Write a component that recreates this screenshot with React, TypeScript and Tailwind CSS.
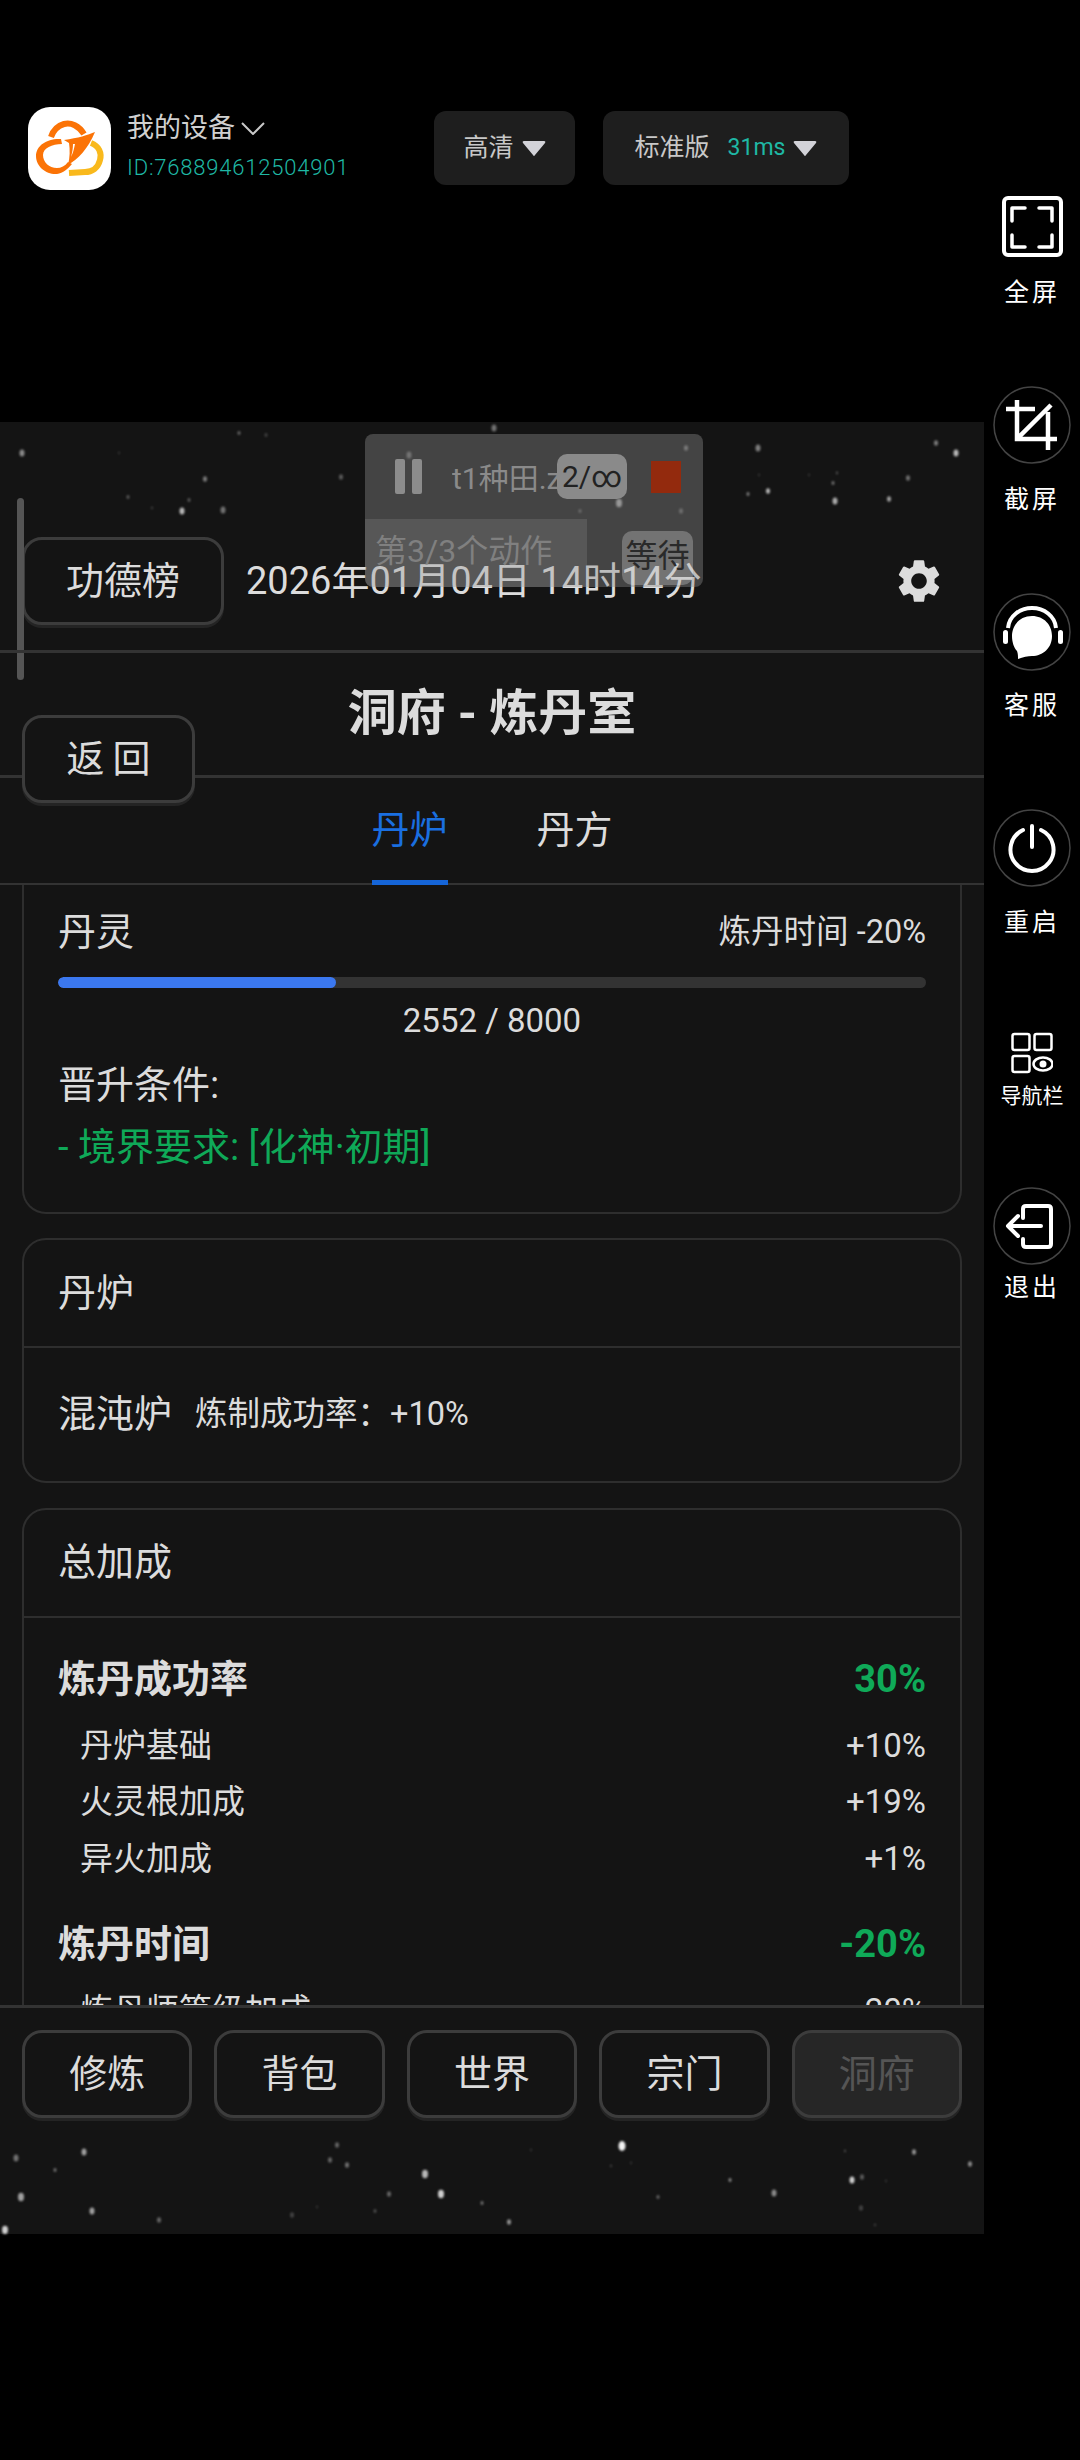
import { MdSettings } from 'react-icons/md';

const topStars: [number, number, number, number][] = [
  [22, 31, 2.5, 0.5], [239, 11, 1.5, 0.35], [266, 13, 1.5, 0.2], [119, 31, 1, 0.15], [205, 57, 2, 0.45], [128, 75, 1.5, 0.3],
  [189, 78, 1.5, 0.3], [182, 89, 2.5, 0.7], [223, 88, 2.5, 0.4], [152, 86, 1, 0.2], [341, 55, 2, 0.3], [494, 6, 2.5, 0.4],
  [686, 26, 2, 0.4], [758, 26, 2.5, 0.45], [936, 21, 2, 0.45], [956, 31, 2.5, 0.7], [837, 51, 1, 0.3], [833, 61, 1.5, 0.4],
  [908, 56, 2, 0.4], [748, 72, 1.5, 0.45], [768, 69, 2, 0.7], [835, 79, 2.5, 0.65], [889, 77, 2, 0.6], [759, 53, 1, 0.15],
  [809, 53, 1, 0.15], [409, 33, 2.5, 0.35], [619, 81, 3, 0.6], [580, 89, 1.5, 0.3], [681, 89, 2, 0.3],
];

const bottomStars: [number, number, number, number][] = [
  [16, 28, 2.5, 0.4], [84, 22, 2.5, 0.6], [55, 40, 1.5, 0.4], [21, 67, 3, 0.6], [92, 81, 2.5, 0.6], [159, 90, 2, 0.35], [5, 100, 3, 0.8],
  [337, 15, 2, 0.35], [330, 30, 2, 0.35], [347, 35, 2, 0.4], [425, 44, 3, 0.7], [389, 64, 2, 0.35], [441, 64, 3, 0.8], [482, 73, 1.5, 0.4],
  [375, 81, 1.5, 0.25], [292, 85, 2, 0.2], [317, 77, 1, 0.15], [509, 92, 2, 0.55], [622, 16, 3.5, 0.95], [531, 20, 1, 0.15], [658, 67, 1.5, 0.35],
  [730, 50, 1.5, 0.5], [774, 63, 2.5, 0.5], [852, 50, 2.5, 0.8], [862, 47, 2, 0.3], [845, 21, 1, 0.25], [914, 22, 2, 0.55], [970, 34, 2, 0.5],
  [861, 78, 2, 0.2], [875, 95, 1, 0.2], [886, 51, 1, 0.15], [611, 36, 1, 0.2], [631, 33, 1, 0.15],
];

function Stars({ height, stars }: { height: number; stars: [number, number, number, number][] }) {
  return (
    <svg width="984" height={height} className="block shrink-0 blur-[1px]">
      {stars.map(([x, y, r, o]) => (
        <ellipse key={`${x}-${y}`} cx={x} cy={y} rx={r} ry={r * 1.4} fill="#ffffff" opacity={o} />
      ))}
    </svg>
  );
}

function Logo() {
  return (
    <div className="h-[83px] w-[83px] shrink-0 rounded-[22px] bg-white">
      <svg width="83" height="83" viewBox="0 0 83 83" fill="none">
        <path d="M63 36 C71 39 74 46 72 53 C70 61 64 65 57 65 L41 66" stroke="#f9b91c" strokeWidth="6" />
        <path d="M56 27 C51 19 43 15 36 17 C29 19 25 24 23 30" stroke="#fb7306" strokeWidth="6" />
        <path d="M33 32 C20 31 8 38 8 49 C8 60 19 68 29 67 C35 66 40 62 44 57 L40 55 C37 59 33 61 29 61 C21 61 15 55 15 48 C15 41 24 37 34 37 Z" fill="#fb7306" />
        <path d="M67 25 C60 28 50 31 36 33 L41 36 C42 43 42 50 40 58 C50 52 60 42 67 25Z" fill="#fb7306" />
        <path d="M45 37 L47 37 C46 42 45 46 43 50 C44 46 45 42 45 37Z" fill="#ffffff" />
      </svg>
    </div>
  );
}

function QualityButton({ children, width }: { children: React.ReactNode; width: string }) {
  return (
    <div className={`flex h-[74px] items-center justify-center gap-2 rounded-xl bg-[#1e1e1e] text-[25px] text-[#c8c8c8] ${width}`}>
      {children}
      <svg width="24" height="17" viewBox="0 0 24 17">
        <path d="M2 1 H22 Q24 1 23 3 L13 15 Q12 17 11 15 L1 3 Q0 1 2 1Z" fill="#d2d2d8" />
      </svg>
    </div>
  );
}

function CircleIcon({ children }: { children: React.ReactNode }) {
  return (
    <svg width="78" height="78" viewBox="0 0 78 78" fill="none" stroke="#ffffff" strokeWidth="4" className="block">
      <circle cx="39" cy="39" r="38" stroke="#444444" strokeWidth="1.5" />
      {children}
    </svg>
  );
}

function RailLabel({ children, className }: { children: string; className: string }) {
  return <div className={`h-[30px] text-center leading-[30px] text-white ${className}`}>{children}</div>;
}

function SideRail() {
  return (
    <div className="flex w-[96px] flex-col items-center pt-[196px]">
      <svg width="61" height="61" viewBox="0 0 61 61" fill="none" stroke="#ffffff" className="block">
        <rect x="2" y="2" width="57" height="57" rx="4" strokeWidth="4" />
        <path d="M10 25 V12 H23 M37 12 H50 V25 M10 39 V51 H23 M37 51 H50 V39" strokeWidth="3.5" strokeLinecap="round" strokeLinejoin="round" />
      </svg>
      <RailLabel className="mt-[21px] text-[25px] tracking-[3px]">全屏</RailLabel>
      <div className="mt-[78px]">
        <CircleIcon>
          <path d="M13 23 H42 M24 14 V53 H64 M58 19 L24 53 M55 26 V64" strokeWidth="4.5" />
        </CircleIcon>
      </div>
      <RailLabel className="mt-[21px] text-[25px] tracking-[3px]">截屏</RailLabel>
      <div className="mt-[78px]">
        <CircleIcon>
          <path d="M15 35 C16 23 27 15 39 15 C51 15 62 23 63 35" />
          <rect x="10" y="37" width="5" height="14" rx="2.5" fill="#ffffff" stroke="none" />
          <rect x="65" y="37" width="5" height="14" rx="2.5" fill="#ffffff" stroke="none" />
          <path d="M39 23 C51 23 59 32 59 43 C59 55 50 63 39 63 C35 63 30 64 25 66 C25 63 25 61 24 58 C21 55 19 49 19 43 C19 32 27 23 39 23Z" fill="#ffffff" stroke="none" />
        </CircleIcon>
      </div>
      <RailLabel className="mt-[20px] text-[25px] tracking-[3px]">客服</RailLabel>
      <div className="mt-[88px]">
        <CircleIcon>
          <path d="M30 21 A21.5 21.5 0 1 0 48 21" strokeLinecap="round" />
          <path d="M39 17 V38" strokeLinecap="round" />
        </CircleIcon>
      </div>
      <RailLabel className="mt-[21px] text-[25px] tracking-[3px]">重启</RailLabel>
      <svg width="42" height="42" viewBox="0 0 42 42" fill="none" stroke="#ffffff" strokeWidth="2.5" className="mt-[94px] block">
        <rect x="1.5" y="2" width="17" height="16" rx="2" />
        <rect x="23.5" y="2" width="17" height="16" rx="2" />
        <rect x="1.5" y="24" width="17" height="16" rx="2" />
        <ellipse cx="32" cy="32" rx="9.5" ry="6.5" />
        <circle cx="32" cy="32" r="3.5" fill="#ffffff" stroke="none" />
      </svg>
      <RailLabel className="mt-[7px] text-[21px]">导航栏</RailLabel>
      <div className="mt-[76px]">
        <CircleIcon>
          <path d="M30 31 V22 Q30 19 33 19 H55 Q58 19 58 22 V57 Q58 60 55 60 H33 Q30 60 30 57 V52" strokeLinecap="round" />
          <path d="M48 39 H15 M25 29 L15 39 L25 49" strokeLinecap="round" strokeLinejoin="round" />
        </CircleIcon>
      </div>
      <RailLabel className="mt-[8px] text-[25px] tracking-[3px]">退出</RailLabel>
    </div>
  );
}

function GameButton({ children, className = '' }: { children: React.ReactNode; className?: string }) {
  return (
    <div className={`flex h-[88px] items-center justify-center rounded-[20px] border-[3px] border-[#3c3c3c] bg-[#141414] text-[38px] text-[#dcdcdc] shadow-[0_3px_0_#242424] ${className}`}>
      {children}
    </div>
  );
}

function TaskOverlay() {
  return (
    <div className="absolute left-[365px] top-[12px] h-[153px] w-[338px] overflow-hidden rounded-[8px] bg-[rgba(140,140,140,0.4)]">
      <div className="flex h-[85px] items-center pl-[30px]">
        <div className="flex w-[27px] justify-between">
          <div className="h-[35px] w-[10px] rounded-[2px] bg-[#8c8c8c]" />
          <div className="h-[35px] w-[10px] rounded-[2px] bg-[#8c8c8c]" />
        </div>
        <div className="ml-[30px] w-[105px] overflow-hidden whitespace-nowrap pt-[4px] text-[30px] text-[#8a8a8a]">t1种田.zip</div>
        <div className="flex h-[45px] w-[70px] items-center justify-center rounded-[10px] bg-[#8a8a8a] text-[30px] text-[#222222]">2/∞</div>
        <div className="ml-[24px] h-[32px] w-[30px] bg-[#932a0d]" />
      </div>
      <div className="flex h-[68px] items-start justify-between pr-[10px]">
        <div className="flex h-full w-[222px] items-center bg-white/10 pb-[4px] pl-[10px] text-[32px] text-[#808080]">第3/3个动作</div>
        <div className="mt-[12px] flex h-[54px] w-[71px] items-center justify-center rounded-[10px] bg-white/25 pb-[4px] text-[32px] text-[#2a2a2a]">等待</div>
      </div>
    </div>
  );
}

function BonusGroup({ title, total, rows }: { title: string; total: string; rows: [string, string][] }) {
  return (
    <div className="mb-[28px]">
      <div className="flex h-[44px] items-center justify-between text-[38px] font-bold">
        <span>{title}</span>
        <span className="text-[#0fa958]">{total}</span>
      </div>
      <div className="mt-[24px] flex flex-col">
        {rows.map(([name, value]) => (
          <div key={name} className="flex h-[56.5px] items-center justify-between pb-[16px] pl-[22px] text-[33px]">
            <span>{name}</span>
            <span>{value}</span>
          </div>
        ))}
      </div>
    </div>
  );
}

export default function App() {
  return (
    <div className="flex h-[2460px] w-[1080px] overflow-hidden bg-black font-['Roboto','Noto_Sans_CJK_SC',sans-serif]">
      <div className="flex w-[984px] flex-col">
        <div className="flex h-[422px] items-start pl-[28px] pt-[107px]">
          <Logo />
          <div className="ml-[16px] w-[223px] pt-[5px]">
            <div className="flex h-[32px] items-center text-[27px] text-[#d0d0d0]">
              我的设备
              <svg width="24" height="13" viewBox="0 0 24 13" fill="none" stroke="#c8c8c8" strokeWidth="2" className="ml-[6px]">
                <path d="M1 1 L12 12 L23 1" />
              </svg>
            </div>
            <div className="mt-[8px] h-[32px] text-[22px] font-light leading-[32px] tracking-[0.8px] text-[#1fb8a5]">ID:768894612504901</div>
          </div>
          <div className="ml-[84px] mt-[4px] flex gap-[28px]">
            <QualityButton width="w-[141px]">高清</QualityButton>
            <QualityButton width="w-[246px]">
              <span>标准版</span>
              <span className="ml-[10px] text-[23px] text-[#1fb8a5]">31ms</span>
            </QualityButton>
          </div>
        </div>

        <div className="relative flex h-[1812px] flex-col bg-[#141414] text-[#dcdcdc]">
          <Stars height={108} stars={topStars} />
          <div className="flex h-[120px] shrink-0 items-center pb-[18px] pl-[22px] pr-[39px]">
            <GameButton className="w-[202px]">功德榜</GameButton>
            <div className="ml-[22px] whitespace-nowrap text-[38px]">2026年01月04日 14时14分</div>
            <MdSettings size={52} className="ml-auto text-[#dcdcdc]" />
          </div>
          <TaskOverlay />
          <div className="absolute left-[17px] top-[76px] h-[182px] w-[7px] rounded-full bg-[#555555]" />

          <div className="relative flex h-[128px] shrink-0 items-center justify-center border-y-[3px] border-[#333333] text-[49px] font-bold">
            洞府 - 炼丹室
          </div>
          <GameButton className="absolute left-[22px] top-[293px] w-[173px] gap-[8px]">
            <span>返</span>
            <span>回</span>
          </GameButton>
          <div className="flex h-[107px] shrink-0 items-center justify-center gap-[89px] border-b-[2px] border-[#333333] text-[38px]">
            <div className="relative flex h-full w-[76px] items-center justify-center text-[#1a6fe0]">
              丹炉
              <div className="absolute bottom-[-2px] h-[5px] w-full bg-[#1565d8]" />
            </div>
            <div className="w-[76px] text-center">丹方</div>
          </div>

          <div className="min-h-0 flex-1 overflow-hidden px-[22px]">
            <div className="rounded-b-[24px] border-x-[2px] border-b-[2px] border-[#2e2e2e] px-[34px] pb-[43px] pt-[26px]">
              <div className="flex h-[42px] items-center justify-between text-[38px]">
                <span>丹灵</span>
                <span className="text-[32.5px]">炼丹时间 -20%</span>
              </div>
              <div className="mt-[24px] h-[11px] overflow-hidden rounded-full bg-[#333333]">
                <div className="h-full w-[32%] rounded-full bg-[#3b78f0]" />
              </div>
              <div className="mt-[13px] text-center text-[33px] leading-[40px]">2552 / 8000</div>
              <div className="mt-[22px] text-[38px] leading-[44px]">晋升条件:</div>
              <div className="mt-[18px] text-[38px] leading-[44px] text-[#0fa958]">- 境界要求: [化神·初期]</div>
            </div>

            <div className="mt-[24px] rounded-[24px] border-[2px] border-[#2e2e2e]">
              <div className="flex h-[108px] items-center border-b-[2px] border-[#2e2e2e] px-[34px] text-[38px]">丹炉</div>
              <div className="flex h-[133px] items-center px-[34px]">
                <span className="text-[38px]">混沌炉</span>
                <span className="ml-[23px] text-[32.5px]">炼制成功率：+10%</span>
              </div>
            </div>

            <div className="mt-[25px] rounded-[24px] border-[2px] border-[#2e2e2e] pb-[40px]">
              <div className="flex h-[108px] items-center border-b-[2px] border-[#2e2e2e] px-[34px] pb-[2px] text-[38px]">总加成</div>
              <div className="px-[34px] pt-[39px]">
                <BonusGroup title="炼丹成功率" total="30%" rows={[['丹炉基础', '+10%'], ['火灵根加成', '+19%'], ['异火加成', '+1%']]} />
                <BonusGroup title="炼丹时间" total="-20%" rows={[['炼丹师等级加成', '-20%']]} />
              </div>
            </div>
          </div>

          <div className="shrink-0 border-t-[3px] border-[#333333] px-[22px] pb-[12px] pt-[22px]">
            <div className="grid grid-cols-5 gap-[22px]">
              <GameButton>修炼</GameButton>
              <GameButton>背包</GameButton>
              <GameButton>世界</GameButton>
              <GameButton>宗门</GameButton>
              <GameButton className="!bg-[#262626] !text-[#555555]">洞府</GameButton>
            </div>
          </div>
          <Stars height={104} stars={bottomStars} />
        </div>
      </div>
      <SideRail />
    </div>
  );
}
